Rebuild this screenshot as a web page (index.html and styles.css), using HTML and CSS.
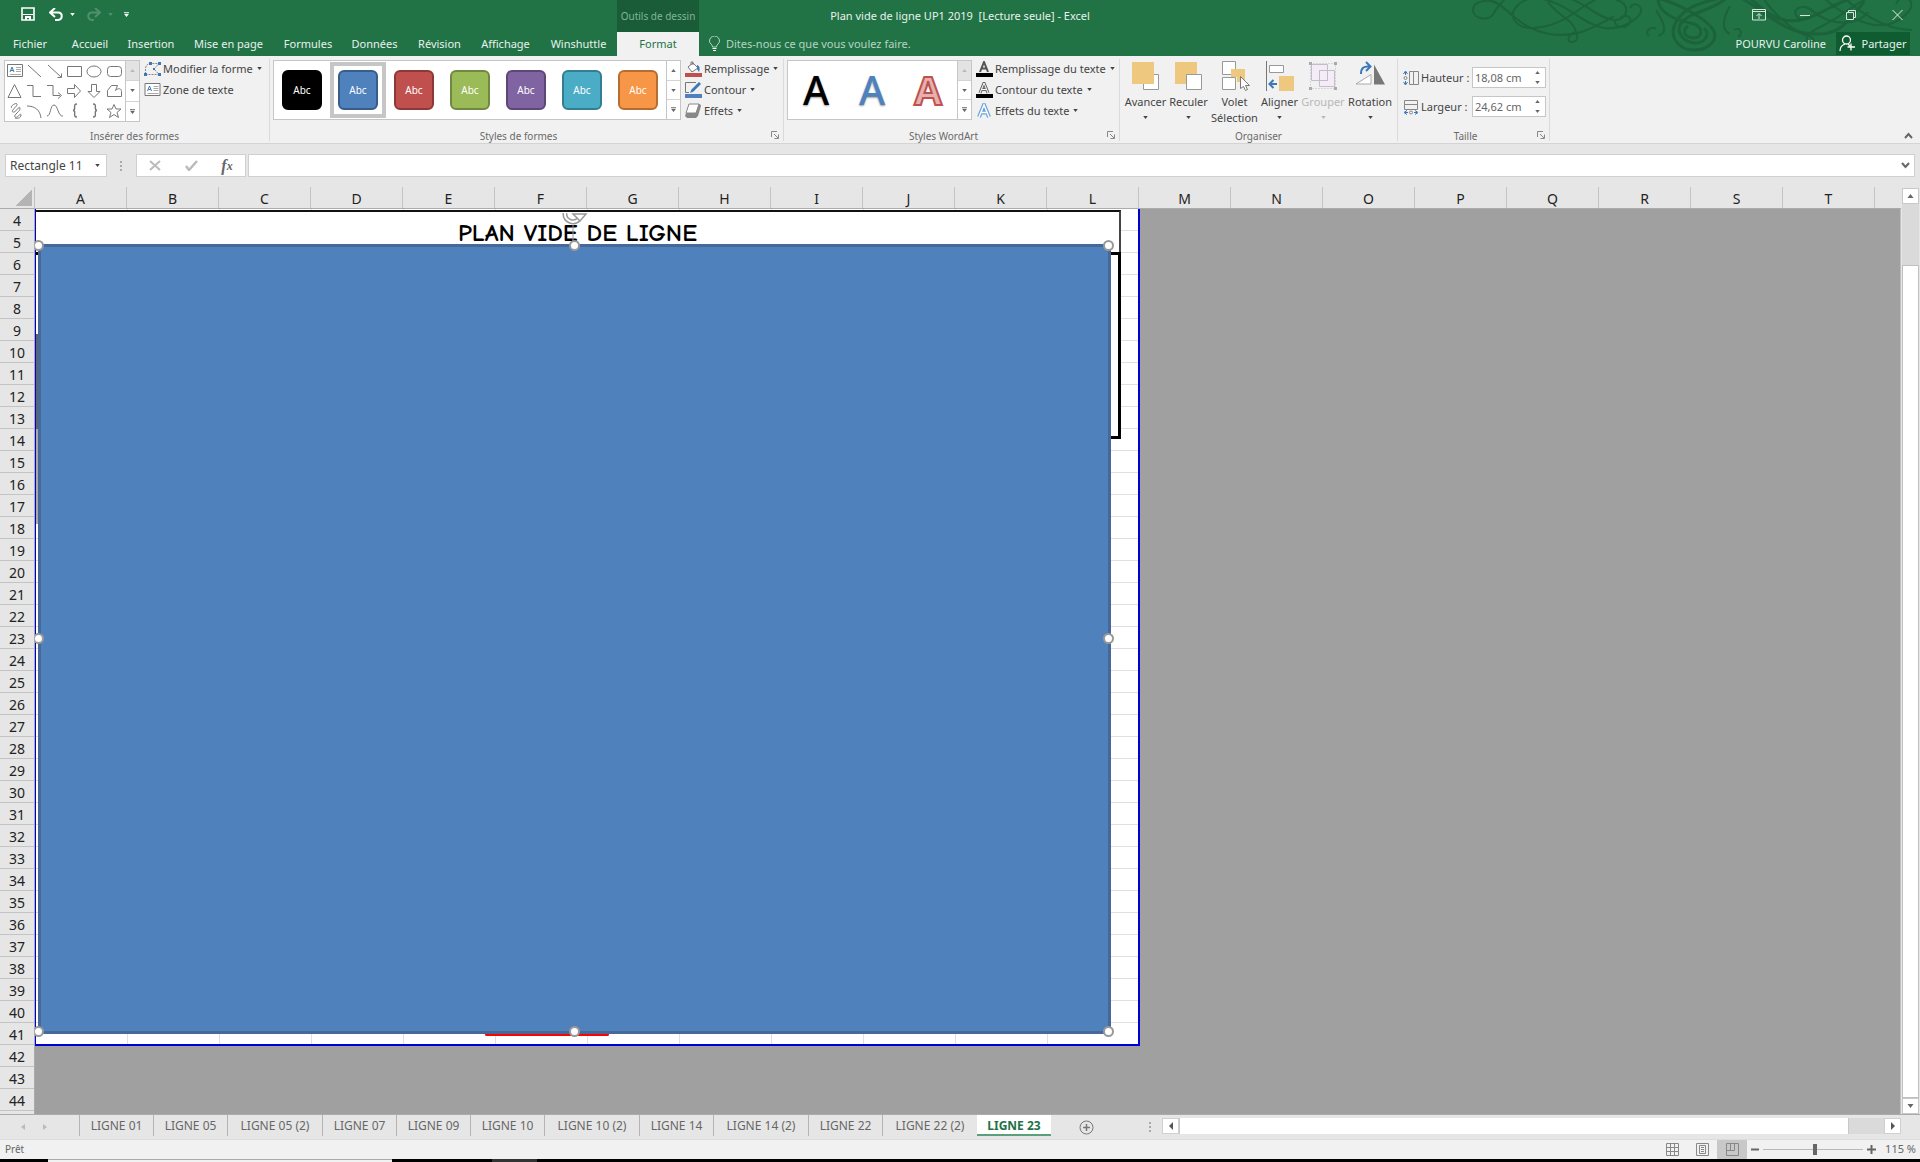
FILE: index.html
```html
<!DOCTYPE html>
<html lang="fr">
<head>
<meta charset="utf-8">
<title>Plan vide de ligne UP1 2019 [Lecture seule] - Excel</title>
<link rel="stylesheet" href="styles.css">
</head>
<body>
<svg class="defs" aria-hidden="true">
  <symbol id="caret" viewBox="0 0 6 4"><path d="M0 0h6L3 4z" fill="currentColor"/></symbol>
  <symbol id="caret-up" viewBox="0 0 6 4"><path d="M0 4h6L3 0z" fill="currentColor"/></symbol>
  <symbol id="more" viewBox="0 0 6 6"><path d="M0 0h6v1H0zM0 2h6L3 6z" fill="currentColor"/></symbol>
  <symbol id="launcher" viewBox="0 0 8 8"><path d="M.5 6V.5H6M3 3l4 4M7.500 3.500v4h-4" fill="none" stroke="#888"/></symbol>
  <symbol id="textbox" viewBox="0 0 16 14"><path d="M.5.5h15v12H.5z" fill="#fff" stroke="#777"/><path d="M3 8l2-5 2 5M4 6.500h2" fill="none" stroke="#3b78b8"/><path d="M9 3.500h5M9 5.500h5M9 7.500h5M3 10.500h11" stroke="#aaa"/></symbol>
</svg>

<header class="top">
  <svg class="swirls" viewBox="0 0 448 56" fill="none" stroke="#1c623b" stroke-width="2" aria-hidden="true">
    <path d="M26 4C16-2 1 1 1 10s16 12 21 3C26 5 32 0 36-4M12-2c26 6 30 30 66 36 26 4 44-6 64-18"/>
    <path d="M66-4C46 0 36 12 43 21c10 14 40 4 53-4 14-9 22-16 34-20M66-2c28 4 44 26 66 30 16 2 30-6 36-14 4-8-6-14-10-6"/>
    <path d="M104 32c-8 2-10 10-4 10s6-6 4-10c-2-12-18-16-28-30M88-4c24 4 36 22 54 24 16 0 16-18 2-20M148 18c8-6 14 2 8 7s-14 1-13-5"/>
    <path stroke-width="3" d="M178-4c26 6 52 20 62 32 8 10-2 22-18 22s-26-14-18-28C214 4 234 2 262-6"/>
    <path stroke-width="3" d="M186-2c0 16 18 22 36 26 8 2 10 14 0 14s-12-8-6-12M232 28c8 8-2 16-10 15s-18-8-14-18c8-14 34-14 46-27"/>
    <path d="M184 29c-6-4-12 4-7 7M186 36c12-4 4-16-2-26M262 30c6-4 10 4 4 7M258 34c-10-4-6-18 0-28"/>
    <path stroke-width="3" d="M262-4c22 4 46 40 84 38 24 0 30-14 46-32M276-4c20 20 36 30 60 22 22-8 34-20 56-22"/>
    <path d="M290-4c12 20 38 40 48 40 6 4 4 10 0 8-8-4 0-12 8-16 22-10 30-20 50-30M354 0c24 20 56 36 78 16 18-14-2-26-8-12"/>
    <path d="M330 20c-16-8 0-20 12-8 14 12 42 16 54 0M370-4c24 22 46 34 70 34"/>
  </svg>

  <div class="titlebar">
    <div class="qat">
      <button aria-label="Enregistrer"><svg width="14" height="14" viewBox="0 0 14 14"><path d="M1 1h12v12H1z" fill="none" stroke="#fff" stroke-width="1.600"/><path d="M2 7.500h10" stroke="#fff"/><path d="M4 9h6v4H8v-2H6v2H4z" fill="#fff"/></svg></button>
      <button aria-label="Annuler"><svg width="14" height="13" viewBox="0 0 14 13"><path d="M6 0L1 4.500 6 9M1.500 4.500H9c5 0 5 7 0 7.500H6" fill="none" stroke="#fff" stroke-width="2"/></svg></button>
      <button class="tiny" aria-label="Liste des annulations"><svg width="5" height="3"><use href="#caret"/></svg></button>
      <button class="off" aria-label="Rétablir"><svg width="14" height="13" viewBox="0 0 14 13"><path d="M8 0l5 4.500L8 9M12.500 4.500H5c-5 0-5 7 0 7.500h2" fill="none" stroke="#4f9070" stroke-width="2"/></svg></button>
      <button class="tiny off" aria-label="Liste des rétablissements"><svg width="5" height="3"><use href="#caret"/></svg></button>
      <button class="custom" aria-label="Personnaliser"><svg width="5" height="5"><use href="#more"/></svg></button>
    </div>
    <div class="context">Outils de dessin</div>
    <h1 class="doc-title">Plan vide de ligne UP1 2019&nbsp; [Lecture seule] - Excel</h1>
    <div class="window-buttons">
      <button aria-label="Options d'affichage du ruban"><svg width="14" height="12" viewBox="0 0 14 12" fill="none" stroke="#d5e5dc"><path d="M.5.500h13v10.500H.5zM.5 2.500h13M7 10V5M4.500 7L7 4.500 9.500 7"/></svg></button>
      <button aria-label="Réduire"><svg width="10" height="12"><path d="M0 6.500h10" stroke="#d5e5dc"/></svg></button>
      <button aria-label="Restaurer"><svg width="11" height="12" viewBox="0 0 11 12" fill="none" stroke="#d5e5dc"><path d="M.5 3.500h7v7h-7zM2.500 3V1.500h7v7H8"/></svg></button>
      <button aria-label="Fermer"><svg width="11" height="12" viewBox="0 0 11 12"><path d="M.5 1l10 10M10.500 1l-10 10" stroke="#e5efe9"/></svg></button>
    </div>
  </div>

  <div class="tabbar">
    <nav class="tabs">
      <a href="#">Fichier</a><a href="#">Accueil</a><a href="#">Insertion</a><a href="#">Mise en page</a><a href="#">Formules</a><a href="#">Données</a><a href="#">Révision</a><a href="#">Affichage</a><a href="#">Winshuttle</a><a href="#" class="current">Format</a>
    </nav>
    <div class="tell">
      <svg width="11" height="16" viewBox="0 0 11 16" fill="none" stroke="#b5d3c2"><path d="M3.500 11C3.500 8 .5 8 .5 5a5 5 0 0 1 10 0c0 3-3 3-3 6z"/><path d="M3.500 12.500h4M4 14.500h3" stroke="#fff"/></svg>
      <input type="text" aria-label="Dites-nous ce que vous voulez faire" placeholder="Dites-nous ce que vous voulez faire.">
    </div>
    <a class="account" href="#">POURVU Caroline</a>
    <button class="share"><svg width="16" height="17" viewBox="0 0 16 17" fill="none" stroke="#fff" stroke-width="1.300"><circle cx="7.500" cy="5" r="4"/><path d="M1 16c0-4 2-6 5-7M9 9l2 2M12 8.500v7M8.500 12H16"/></svg>Partager</button>
  </div>
</header>

<section class="ribbon" aria-label="Format">
  <div class="group g-insert">
    <div class="body">
      <div class="gallery shapes">
        <svg width="120" height="60" viewBox="0 0 120 60" fill="none" stroke="#777">
          <use href="#textbox" x="2" y="3" width="16" height="14"/>
          <path d="M23 4l13 12M43 4l13 12M52.500 16.500h4v-4M62.500 5.500h14v10h-14z"/>
          <ellipse cx="89" cy="10.500" rx="7" ry="5.500"/><rect x="102.500" y="5.500" width="14" height="10" rx="3"/>
          <path d="M9.500 23.500l6.500 13H3zM22 24.500h6v11h8M42 24.500h6v10h7M53 31.500l3.500 3-3.500 3M62.500 27.500h7v-4l6 6.500-6 6.500v-4h-7zM86.500 23.500h5v7h3.500l-6 6-6-6h3.500zM102.500 29.500l4-5h6l-2 5c3-3 6-2 6 1v5h-14z"/>
          <path d="M7 47c-3-1 4-6 5-4s-7 7-4 8 6-7 7-4-7 7-5 9 6-5 6-2-4 4-6 3M22 45c8 0 13 4 14 12M42 55c4 0 3-11 7-11s4 12 9 11"/>
          <path d="M72 43c-5 0 0 6-4 6.500 4 0-1 6.500 4 6.500M88 43c5 0 0 6 4 6.500-4 0 1 6.500-4 6.500" stroke-width="1.400"/>
          <path d="M109 43.500l2 4.500h5l-4 3.500 1.500 5-4.500-3-4.500 3 1.500-5-4-3.500h5z"/>
        </svg>
        <div class="scroller"><button class="off" aria-label="Formes précédentes"><svg width="5" height="3"><use href="#caret-up"/></svg></button><button aria-label="Formes suivantes"><svg width="5" height="3"><use href="#caret"/></svg></button><button aria-label="Toutes les formes"><svg width="5" height="5"><use href="#more"/></svg></button></div>
      </div>
      <div class="commands">
        <button><svg width="17" height="14" viewBox="0 0 17 14" fill="none" stroke="#888"><path d="M1.500 12V6C2 3 4 1.500 7 1.500h8L10 7l5 5.500H2" stroke-dasharray="2 1"/><path d="M0 11h3v3H0zM5 0h3v3H5zM14 0h3v3h-3zM14 11h3v3h-3zM9 6h2v2H9z" fill="#3b78b8" stroke="none"/></svg>Modifier la forme<svg width="5" height="3"><use href="#caret"/></svg></button>
        <button><svg width="17" height="14"><use href="#textbox"/></svg>Zone de texte</button>
      </div>
    </div>
    <h2>Insérer des formes</h2>
  </div>

  <div class="group g-styles">
    <div class="body">
      <div class="gallery styles">
        <button class="swatch black">Abc</button><button class="swatch blue chosen">Abc</button><button class="swatch red">Abc</button><button class="swatch green">Abc</button><button class="swatch purple">Abc</button><button class="swatch aqua">Abc</button><button class="swatch orange">Abc</button>
        <div class="scroller"><button aria-label="Styles précédents"><svg width="5" height="3"><use href="#caret-up"/></svg></button><button aria-label="Styles suivants"><svg width="5" height="3"><use href="#caret"/></svg></button><button aria-label="Tous les styles"><svg width="5" height="5"><use href="#more"/></svg></button></div>
      </div>
      <div class="commands">
        <button><svg width="17" height="16" viewBox="0 0 17 16"><path d="M3 6l5-4 5 5-6 4zM6 4V1h2v3" fill="#fff" stroke="#777"/><path d="M12 4c3 1 3 4 2 7l-2-3z" fill="#3b78b8"/><path d="M0 12h17v4H0z" fill="#c0504d"/></svg>Remplissage<svg width="5" height="3"><use href="#caret"/></svg></button>
        <button><svg width="17" height="16" viewBox="0 0 17 16"><path d="M11 .5H.5v10H4" fill="none" stroke="#777"/><path d="M5 11l1.500-3.500L14 0l2 2-7.500 7.500z" fill="#3b78b8"/><path d="M0 12h17v4H0z" fill="#4f81bd"/></svg>Contour<svg width="5" height="3"><use href="#caret"/></svg></button>
        <button><svg width="17" height="15" viewBox="0 0 17 15"><path d="M4 1h11l1 2-3 10-2 2H2l-2-2z" fill="#888"/><path d="M4 1h10l-3 9H1z" fill="#fff" stroke="#888"/></svg>Effets<svg width="5" height="3"><use href="#caret"/></svg></button>
      </div>
    </div>
    <h2>Styles de formes</h2>
    <button class="launcher" aria-label="Format de la forme"><svg width="8" height="8"><use href="#launcher"/></svg></button>
  </div>

  <div class="group g-wordart">
    <div class="body">
      <div class="gallery wordart">
        <button class="wa wa-black">A</button><button class="wa wa-blue">A</button><button class="wa wa-red">A</button>
        <div class="scroller"><button class="off" aria-label="WordArt précédents"><svg width="5" height="3"><use href="#caret-up"/></svg></button><button aria-label="WordArt suivants"><svg width="5" height="3"><use href="#caret"/></svg></button><button aria-label="Tous les WordArt"><svg width="5" height="5"><use href="#more"/></svg></button></div>
      </div>
      <div class="commands">
        <button><svg width="17" height="16" viewBox="0 0 17 16"><path d="M4 11L8 1l4 10M5.500 7.500h5" fill="none" stroke="#555" stroke-width="2"/><path d="M0 12h17v4H0z"/></svg>Remplissage du texte<svg width="5" height="3"><use href="#caret"/></svg></button>
        <button><svg width="17" height="16" viewBox="0 0 17 16"><path d="M4 11L8 1l4 10M5.500 7.500h5" fill="none" stroke="#666" stroke-width="3"/><path d="M4 11L8 1l4 10M5.500 7.500h5" fill="none" stroke="#fff"/><path d="M0 12h17v4H0z"/></svg>Contour du texte<svg width="5" height="3"><use href="#caret"/></svg></button>
        <button><svg width="17" height="15" viewBox="0 0 17 15"><path d="M3 14L8 2l5 12M5 9.500h6" fill="none" stroke="#6ba3dc" stroke-width="4"/><path d="M3 14L8 2l5 12M5 9.500h6" fill="none" stroke="#fff" stroke-width="1.500"/></svg>Effets du texte<svg width="5" height="3"><use href="#caret"/></svg></button>
      </div>
    </div>
    <h2>Styles WordArt</h2>
    <button class="launcher" aria-label="Format des effets de texte"><svg width="8" height="8"><use href="#launcher"/></svg></button>
  </div>

  <div class="group g-arrange">
    <div class="body">
      <button><svg width="30" height="30" viewBox="0 0 30 30"><path d="M12.500 13.500h15v15h-15z" fill="#fff" stroke="#999"/><path d="M1 1h22v22H1z" fill="#edc87e"/></svg>Avancer<svg width="5" height="3"><use href="#caret"/></svg></button>
      <button><svg width="30" height="30" viewBox="0 0 30 30"><path d="M1 1h22v22H1z" fill="#edc87e"/><path d="M12.500 13.500h15v15h-15z" fill="#fff" stroke="#999"/></svg>Reculer<svg width="5" height="3"><use href="#caret"/></svg></button>
      <button><svg width="30" height="30" viewBox="0 0 30 30"><path d="M2.500.5h13v13h-13zM2.500 16.500h13v12h-13z" fill="#fff" stroke="#999"/><path d="M11 8h14v13h-8v-5h-6z" fill="#edc87e"/><path d="M20.500 15.500v12l3-2 2 4 2-1-2-4h4z" fill="#fff" stroke="#777"/></svg>Volet<br>Sélection</button>
      <button><svg width="30" height="30" viewBox="0 0 30 30"><path d="M1.500 0v30" stroke="#777"/><path d="M4.500 4.500h14v7h-14z" fill="#fff" stroke="#999"/><path d="M14 15h15v15H14z" fill="#edc87e"/><path d="M12 23H5M8.500 19l-4 4 4 4" fill="none" stroke="#3b78b8" stroke-width="2"/></svg>Aligner<svg width="5" height="3"><use href="#caret"/></svg></button>
      <button class="off"><svg width="30" height="30" viewBox="0 0 30 30"><path d="M2.500 2.500h25v25h-25z" fill="none" stroke="#bbb" stroke-dasharray="1 2"/><path d="M3.500 3.500h16v16h-16zM11.500 9.500h15v16h-15z" fill="#f4ecf6" stroke="#c4bcc8"/><path d="M11.500 9.500h8v10h-8z" fill="none" stroke="#c4bcc8"/><path d="M1 1h3v3H1zM26 1h3v3h-3zM1 26h3v3H1zM26 26h3v3h-3z" fill="#aaa"/></svg>Grouper<svg width="5" height="3"><use href="#caret"/></svg></button>
      <button><svg width="30" height="30" viewBox="0 0 30 30"><path d="M16 13.500v9.500H1z" fill="#fff" stroke="#aaa"/><path d="M19 3.500v20h11z" fill="#777"/><path d="M6 13c0-6 3-8 8-7.500M11 1l4.500 4.500L11 10" fill="none" stroke="#3b78b8" stroke-width="2"/></svg>Rotation<svg width="5" height="3"><use href="#caret"/></svg></button>
    </div>
    <h2>Organiser</h2>
  </div>

  <div class="group g-size">
    <div class="body">
      <div class="size-row">
        <svg width="16" height="16" viewBox="0 0 16 16" fill="none"><path d="M6.500 1.500h4v13h-4zM10.500 1.500h5v13h-5z" stroke="#888"/><path d="M2.500 5V2M2.500 11v3M.5 4l2-3 2 3M.5 12l2 3 2-3" stroke="#3b78b8"/><circle cx="2.500" cy="8" r="1.500" stroke="#888"/></svg>
        <label for="shape-h">Hauteur :</label>
        <span class="spin"><input id="shape-h" type="text" value="18,08 cm"><span class="arrows"><button aria-label="Augmenter la hauteur"><svg width="5" height="3"><use href="#caret-up"/></svg></button><button aria-label="Diminuer la hauteur"><svg width="5" height="3"><use href="#caret"/></svg></button></span></span>
      </div>
      <div class="size-row">
        <svg width="16" height="16" viewBox="0 0 16 16" fill="none"><path d="M1.500 1.500h13v4h-13zM1.500 5.500h13v5h-13z" stroke="#888"/><path d="M5 13.500H2M11 13.500h3M4 11.500l-3 2 3 2M12 11.500l3 2-3 2" stroke="#3b78b8"/><circle cx="8" cy="13.500" r="1.500" stroke="#888"/></svg>
        <label for="shape-w">Largeur :</label>
        <span class="spin"><input id="shape-w" type="text" value="24,62 cm"><span class="arrows"><button aria-label="Augmenter la largeur"><svg width="5" height="3"><use href="#caret-up"/></svg></button><button aria-label="Diminuer la largeur"><svg width="5" height="3"><use href="#caret"/></svg></button></span></span>
      </div>
    </div>
    <h2>Taille</h2>
    <button class="launcher" aria-label="Taille et propriétés"><svg width="8" height="8"><use href="#launcher"/></svg></button>
  </div>
  <button class="collapse" aria-label="Réduire le ruban"><svg width="9" height="7" viewBox="0 0 9 7"><path d="M1 6l3.500-4L8 6" fill="none" stroke="#666" stroke-width="2"/></svg></button>
</section>

<div class="formula">
  <div class="namebox"><input type="text" aria-label="Zone Nom" value="Rectangle 11"><button aria-label="Liste des noms"><svg width="5" height="3"><use href="#caret"/></svg></button></div>
  <span class="dots"></span>
  <div class="fx-buttons">
    <button aria-label="Annuler la saisie"><svg width="12" height="11" viewBox="0 0 12 11"><path d="M1 1l10 9M11 1L1 10" stroke="#bbb" stroke-width="2"/></svg></button>
    <button aria-label="Entrer"><svg width="13" height="11" viewBox="0 0 13 11"><path d="M1 6l3 4 8-9" fill="none" stroke="#bbb" stroke-width="2.500"/></svg></button>
    <button class="fx" aria-label="Insérer une fonction">f<sub>x</sub></button>
  </div>
  <div class="fx-input"><input type="text" aria-label="Barre de formule"><button aria-label="Développer"><svg width="9" height="7" viewBox="0 0 9 7"><path d="M1 1l3.500 4L8 1" fill="none" stroke="#666" stroke-width="2"/></svg></button></div>
</div>

<main class="sheet">
  <div class="corner"></div>
  <ol class="cols"><li>A</li><li>B</li><li>C</li><li>D</li><li>E</li><li>F</li><li>G</li><li>H</li><li>I</li><li>J</li><li>K</li><li>L</li><li>M</li><li>N</li><li>O</li><li>P</li><li>Q</li><li>R</li><li>S</li><li>T</li><li></li></ol>
  <ol class="rows"><li>4</li><li>5</li><li>6</li><li>7</li><li>8</li><li>9</li><li>10</li><li>11</li><li>12</li><li>13</li><li>14</li><li>15</li><li>16</li><li>17</li><li>18</li><li>19</li><li>20</li><li>21</li><li>22</li><li>23</li><li>24</li><li>25</li><li>26</li><li>27</li><li>28</li><li>29</li><li>30</li><li>31</li><li>32</li><li>33</li><li>34</li><li>35</li><li>36</li><li>37</li><li>38</li><li>39</li><li>40</li><li>41</li><li>42</li><li>43</li><li>44</li><li></li></ol>
  <div class="canvas">
    <div class="print-area">
      <div class="plan-title">PLAN VIDE DE LIGNE</div>
      <div class="plan-box"></div>
      <div class="photo"></div>
      <div class="red-line"></div>
      <div class="shape">
        <svg class="rotate" width="30" height="34" viewBox="0 0 30 34" fill="none"><path d="M15 12v22" stroke="#999"/><path d="M7 0a8 8 0 0 0 14 6" stroke="#999" stroke-width="5"/><path d="M7 0a8 8 0 0 0 14 6" stroke="#fff" stroke-width="2"/><path d="M15 1h13l-6 7z" fill="#fff" stroke="#999" stroke-width="1.500"/></svg>
        <i class="handle n w"></i><i class="handle n"></i><i class="handle n e"></i><i class="handle w"></i><i class="handle e"></i><i class="handle s w"></i><i class="handle s"></i><i class="handle s e"></i>
      </div>
    </div>
  </div>
  <div class="vscroll"><button aria-label="Défiler vers le haut"><svg width="7" height="4"><use href="#caret-up"/></svg></button><div class="vtrack"><div class="vthumb"></div></div><button aria-label="Défiler vers le bas"><svg width="7" height="4"><use href="#caret"/></svg></button></div>
</main>

<div class="sheetbar">
  <div class="sheet-nav"><button aria-label="Feuille précédente"><svg width="4" height="6"><path d="M4 0v6L0 3z" fill="#bbb"/></svg></button><button aria-label="Feuille suivante"><svg width="4" height="6"><path d="M0 0v6l4-3z" fill="#bbb"/></svg></button></div>
  <nav class="sheet-tabs">
    <a href="#">LIGNE 01</a><a href="#">LIGNE 05</a><a href="#" class="copy">LIGNE 05 (2)</a><a href="#">LIGNE 07</a><a href="#">LIGNE 09</a><a href="#">LIGNE 10</a><a href="#" class="copy">LIGNE 10 (2)</a><a href="#">LIGNE 14</a><a href="#" class="copy">LIGNE 14 (2)</a><a href="#">LIGNE 22</a><a href="#" class="copy">LIGNE 22 (2)</a><a href="#" class="active">LIGNE 23</a>
  </nav>
  <button class="add" aria-label="Nouvelle feuille"><svg width="15" height="15" viewBox="0 0 15 15" fill="none" stroke="#777"><circle cx="7.500" cy="7.500" r="6.500"/><path d="M7.500 4v7M4 7.500h7" stroke-width="1.500"/></svg></button>
  <span class="dots"></span>
  <div class="hscroll"><button aria-label="Défiler à gauche"><svg width="4" height="8"><path d="M4 0v8L0 4z" fill="#555"/></svg></button><div class="htrack"><div class="hthumb"></div></div><button aria-label="Défiler à droite"><svg width="4" height="8"><path d="M0 0v8l4-4z" fill="#555"/></svg></button></div>
</div>

<footer class="status">
  <span class="ready">Prêt</span>
  <button aria-label="Normal"><svg width="13" height="13" viewBox="0 0 13 13" fill="none" stroke="#888"><path d="M.5.5h12v12H.5zM.5 4.500h12M.5 8.500h12M4.500 0v13M8.500 0v13"/></svg></button>
  <button aria-label="Mise en page"><svg width="13" height="13" viewBox="0 0 13 13" fill="none" stroke="#888"><path d="M.5.5h12v12H.5zM3.500 2.500h6v8h-6zM5 4.500h3M5 6.500h3M5 8.500h3"/></svg></button>
  <button class="on" aria-label="Aperçu des sauts de page"><svg width="13" height="13" viewBox="0 0 13 13" fill="none" stroke="#888"><path d="M.5.5h12v12H.5zM4.500 0v7.500M8.500 0v7.500M0 7.500h8.500"/></svg></button>
  <button class="step" aria-label="Zoom arrière"><svg width="8" height="9"><path d="M0 4.500h8" stroke="#666" stroke-width="2"/></svg></button>
  <input class="zoom" type="range" min="0" max="100" value="52" aria-label="Zoom">
  <button class="step" aria-label="Zoom avant"><svg width="9" height="9"><path d="M0 4.500h9M4.500 0v9" stroke="#666" stroke-width="2"/></svg></button>
  <span class="percent">115 %</span>
</footer>
<div class="taskbar"><span class="task-light"></span><span class="task-gray"></span></div>
</body>
</html>
```
FILE: styles.css
```css
*, *::before { box-sizing: border-box; }
body {
  margin: 0; height: 100vh; overflow: hidden;
  display: flex; flex-direction: column;
  font: 11px/16px "Segoe UI", "Noto Sans", sans-serif;
  color: #444; background: #e6e6e6;
}
button, input { font: inherit; color: inherit; border: 0; padding: 0; margin: 0; background: none; min-width: 0; }
input { outline: 0; }
button { display: flex; align-items: center; justify-content: center; white-space: nowrap; }
a { color: inherit; text-decoration: none; white-space: nowrap; }
h1, h2 { margin: 0; font-weight: 400; }
ol { list-style: none; margin: 0; padding: 0; }
svg { display: block; flex: none; }
.defs { position: absolute; width: 0; height: 0; }
.off { color: #b8b8b8; }

/* title bar and tabs */
.top { position: relative; background: #217346; color: #e8f1ec; flex: none; }
.swirls { position: absolute; top: 0; right: 0; width: 448px; height: 56px; }
.titlebar { position: relative; height: 32px; display: grid; grid-template-columns: 617px 82px 1fr 699px; }
.qat { display: flex; align-items: center; padding: 0 0 4px 21px; color: #fff; }
.qat button { width: 14px; margin-right: 14px; }
.qat .tiny { width: 5px; margin: 0 12px 0 -7px; }
.qat .tiny.off { color: #4f9070; margin-right: 10px; }
.qat .custom { width: 6px; margin: 0; }
.context { background: #1b5c38; color: #7fb796; text-align: center; font-size: 10px; line-height: 32px; white-space: nowrap; }
.doc-title { font-size: 11px; line-height: 32px; text-align: center; white-space: nowrap; }
.window-buttons { display: flex; justify-content: flex-end; height: 30px; }
.window-buttons button { width: 46px; }
.tabbar { position: relative; height: 24px; display: flex; }
.tabs { display: grid; grid-template-columns: 60px 60px 62px 93px 66px 67px 63px 69px 77px 82px; line-height: 24px; text-align: center; }
.current { background: #f1f1f1; color: #217346; }
.tell { flex: 1; display: flex; align-items: center; gap: 6px; padding-left: 10px; color: #b5d3c2; }
.tell input { flex: 1; }
.tell input::placeholder { color: #b5d3c2; opacity: 1; }
.account { line-height: 24px; margin-right: 10px; }
.share { width: 74px; margin: 0 10px 1px 0; gap: 6px; background: #0e5c2f; }

/* ribbon */
.ribbon { position: relative; height: 88px; flex: none; display: flex; background: #f1f1f1; border-bottom: 1px solid #d4d4d4; }
.group { position: relative; margin: 3px 0 2px; border-right: 1px solid #dadada; }
.group h2 { height: 14px; font-size: 10px; line-height: 14px; text-align: center; color: #6a6a6a; margin-top: 6px; }
.g-styles h2, .g-wordart h2, .g-size h2 { padding-right: 16px; }
.body { display: flex; height: 64px; }
.g-insert { width: 270px; } .g-styles { width: 514px; } .g-wordart { width: 336px; } .g-arrange { width: 278px; } .g-size { width: 152px; }
.g-insert .body { padding-left: 4px; }
.g-styles .body, .g-wordart .body { padding-left: 3px; }
.launcher { position: absolute; right: 4px; bottom: 2px; }
.gallery { height: 60px; margin-top: 1px; display: flex; background: #fff; border: 1px solid #c6c6c6; }
.shapes { height: 62px; }
.scroller { width: 14px; display: flex; flex-direction: column; border-left: 1px solid #c6c6c6; color: #666; }
.scroller button { flex: 1; }
.scroller button + button { border-top: 1px solid #d4d4d4; }
.scroller .off { background: #e3e3e3; }
.commands { padding-left: 4px; margin-top: -1px; }
.commands button { height: 21px; gap: 4px; }
.commands button svg:first-child { margin-right: -2px; }
.swatch { width: 56px; height: 56px; margin-top: 1px; border: 4px solid transparent; color: #fff; font-size: 10px; position: relative; z-index: 0; }
.swatch::before { content: ""; position: absolute; z-index: -1; inset: 4px; border-radius: 6px; border: 2px solid; background: var(--fill); border-color: var(--edge); }
.chosen { border-color: #c6c6c6; }
.black { --fill: #000; --edge: #000; } .blue { --fill: #4f81bd; --edge: #385d8a; } .red { --fill: #c0504d; --edge: #8c3836; }
.green { --fill: #9bbb59; --edge: #71893f; } .purple { --fill: #8064a2; --edge: #5c4776; } .aqua { --fill: #4bacc6; --edge: #357d91; } .orange { --fill: #f79646; --edge: #b66d31; }
.wa { width: 56px; font-size: 40px; font-weight: 500; text-shadow: 0 1px 2px #999; }
.wordart { width: 185px; } .wordart .scroller { margin-left: auto; }
.wa-black { color: #000; } .wa-blue { color: #4f81bd; } .wa-red { color: #e6b0af; font-weight: 700; -webkit-text-stroke: 2px #c0504d; text-shadow: none; }
.g-arrange .body { display: grid; grid-template-columns: 43px 43px 49px 41px 46px 48px; padding: 2px 4px 0; height: 70px; }
.g-arrange .body button { flex-direction: column; justify-content: flex-start; line-height: 16px; }
.g-arrange .body svg:first-child { margin-bottom: 3px; }
.g-arrange .body svg + svg { margin-top: 6px; }
.g-arrange h2 { margin-top: 0; }
.g-size .body { flex-direction: column; gap: 8px; padding: 8px 3px 0 5px; }
.size-row { display: flex; align-items: center; gap: 2px; height: 21px; }
.size-row label { flex: 1; min-width: 0; white-space: nowrap; }
.spin { width: 74px; flex: none; height: 21px; display: flex; background: #fff; border: 1px solid #c6c6c6; color: #666; }
.spin input { flex: 1; width: 40px; padding-left: 2px; }
.arrows { width: 15px; display: flex; flex-direction: column; }
.arrows button { flex: 1; }
.collapse { position: absolute; right: 7px; bottom: 4px; }

/* formula bar */
.formula { height: 43px; flex: none; display: flex; padding: 10px 5px 10px; }
.namebox, .fx-buttons, .fx-input { display: flex; background: #fff; border: 1px solid #d0d0d0; }
.namebox { width: 102px; }
.namebox input { flex: 1; padding-left: 4px; font-size: 12px; }
.namebox button { width: 18px; }
.dots { width: 2px; height: 10px; align-self: center; background: repeating-linear-gradient(#aaa 0 2px, transparent 2px 4px); margin: 0 14px 0 13px; }
.fx-buttons { width: 110px; }
.fx-buttons button { flex: 1; }
.fx-buttons .fx { font: italic 700 16px/20px "Liberation Serif", serif; color: #666; }
.fx sub { font-size: 12px; line-height: 12px; }
.fx-input { flex: 1; margin-left: 2px; }
.fx-input input { flex: 1; }
.fx-input button { width: 18px; }

/* worksheet */
.sheet { flex: 1; min-height: 0; display: grid; grid-template: 22px 1fr / 35px 1fr 19px; overflow: hidden; border-bottom: 1px solid #ababab; }
.corner { position: relative; border-right: 1px solid #c0c0c0; border-bottom: 1px solid #ababab; background: linear-gradient(135deg, transparent 50%, #b4b4b4 50%) 16px 3px / 16px 16px no-repeat; }
.cols { display: flex; overflow: hidden; border-bottom: 1px solid #ababab; }
.cols li { flex: none; width: 92px; text-align: center; font-size: 14px; line-height: 23px; color: #222; border-right: 1px solid #c4c4c4; }
.cols li:last-child { border: 0; }
.rows { grid-column: 1; overflow: hidden; border-right: 1px solid #ababab; color: #222; }
.rows li { height: 22px; text-align: center; font-size: 14px; line-height: 23px; border-bottom: 1px solid #c4c4c4; }
.canvas { background: #a0a0a0; overflow: hidden; border-right: 1px solid #c0c0c0; }
.print-area {
  position: relative; width: 1105px; height: 837px; padding-top: 1px; border: solid #0000d0; border-width: 0 2px 2px 1px;
  background:
    repeating-linear-gradient(transparent 0 21px, #e0e0e0 21px 22px),
    repeating-linear-gradient(90deg, transparent 0 91px, #e0e0e0 91px 92px), #fff;
}
.plan-title { width: 1085px; height: 42px; padding-top: 7px; border-top: 2px solid #111; border-right: 2px solid #444; background: #fff; text-align: center; font: 700 25px/28px "Comic Sans MS", "Comic Neue", "Noto Sans", sans-serif; color: #000; }
.plan-box { width: 1085px; height: 187px; background: #fff; border: 3px solid #000; border-left: 0; }
.photo { position: absolute; left: 0; top: 125px; width: 2px; height: 190px; background: linear-gradient(#5a6578 0 50%, #aaa 50%); }
.red-line { position: absolute; left: 449px; top: 824px; width: 124px; height: 3px; border-radius: 2px; background: #f00; }
.shape { position: absolute; left: 2px; top: 35px; width: 1073px; height: 790px; background: #4f81bd; border: 3px solid #47699a; }
.rotate { position: absolute; left: 50%; margin-left: -17px; bottom: 100%; }
.handle { position: absolute; left: 50%; top: 50%; width: 11px; height: 11px; margin: -6px; border: 2px solid #999; border-radius: 50%; background: #fff; }
.handle.n { top: -1px; } .handle.s { top: calc(100% + 1px); }
.handle.w { left: -2px; } .handle.e { left: calc(100% + 1px); }
.vscroll { grid-column: 3; grid-row: 1 / 3; display: flex; flex-direction: column; padding: 1px 1px 0 1px; }
.vscroll button { height: 16px; background: #fff; border: 1px solid #c8c8c8; color: #666; }
.vtrack { flex: 1; background: #dadada; padding-top: 61px; display: flex; }
.vthumb { flex: 1; background: #fff; border: 1px solid #c0c0c0; }

/* sheet tabs */
.sheetbar { height: 24px; flex: none; display: flex; padding-right: 19px; }
.sheet-nav { width: 79px; display: flex; gap: 18px; padding-left: 21px; }
.sheet-tabs { display: flex; margin-bottom: 3px; }
.sheet-tabs a { width: 74px; height: 21px; font-size: 12px; line-height: 21px; text-align: center; color: #666; border-left: 1px solid #b4b4b4; }
.sheet-tabs .copy { width: 95px; }
.sheet-tabs .active { color: #217346; font-weight: 700; background: #fff; border-left: 0; border-bottom: 2px solid #5ba07b; }
.add { width: 34px; margin-left: 18px; }
.sheetbar .dots { margin: 0 11px 0 46px; }
.hscroll { flex: 1; display: flex; height: 16px; margin-top: 3px; }
.hscroll button { width: 17px; background: #fff; border: 1px solid #d0d0d0; }
.htrack { flex: 1; background: #dadada; padding-right: 35px; display: flex; }
.hthumb { flex: 1; background: #fff; border: 1px solid #c8c8c8; border-width: 0 1px; }

/* status bar */
.status { height: 20px; flex: none; display: flex; background: #f1f1f1; border-top: 1px solid #dcdcdc; font-size: 10px; line-height: 18px; color: #666; padding-right: 4px; }
.ready { flex: 1; padding-left: 5px; }
.status button { width: 30px; }
.status .on { background: #c8c8c8; }
.status .step { width: 16px; }
.zoom { width: 100px; appearance: none; height: 19px; }
.zoom::-webkit-slider-runnable-track { height: 1px; background: #b8b8b8; }
.zoom::-webkit-slider-thumb { appearance: none; width: 4px; height: 11px; margin-top: -5px; background: #666; }
.percent { width: 37px; text-align: right; font-size: 11px; }
.taskbar { height: 3px; flex: none; display: flex; background: #000; }
.task-light { width: 344px; margin-left: 48px; background: #f1f1f1; border-top: 1px solid #aaa; }
.task-gray { width: 45px; margin-left: 100px; background: #333; }
```
